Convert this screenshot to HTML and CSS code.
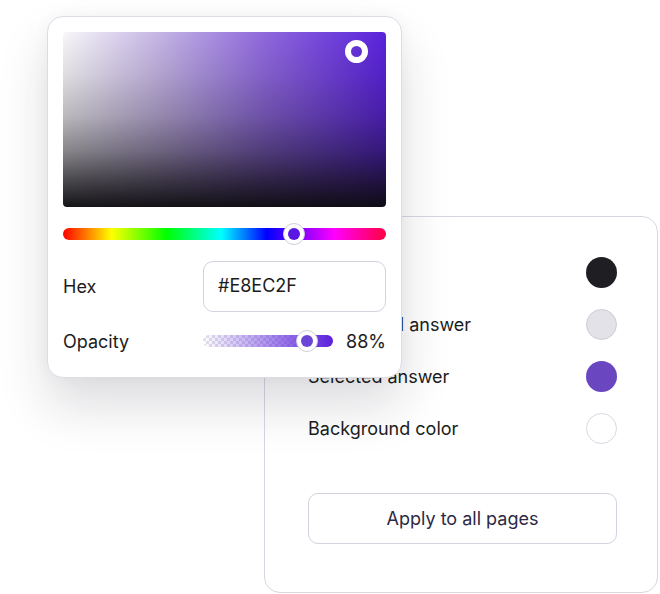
FILE: index.html
```html
<!DOCTYPE html>
<html lang="en">
<head>
    <meta charset="UTF-8">
    <meta name="viewport" content="width=device-width, initial-scale=1.0">
    <title>Color settings</title>
    <link rel="stylesheet" href="styles.css">
</head>
<body>
    <div class="stage">
        <!-- Settings card -->
        <div class="settings">
            <div class="row">
                <span>Text color</span>
                <span class="swatch swatch-dark"></span>
            </div>
            <div class="row">
                <span>Conditional answer</span>
                <span class="swatch swatch-light"></span>
            </div>
            <div class="row">
                <span>Selected answer</span>
                <span class="swatch swatch-purple"></span>
            </div>
            <div class="row">
                <span>Background color</span>
                <span class="swatch swatch-white"></span>
            </div>
            <button class="apply">Apply to all pages</button>
        </div>

        <!-- Color picker popover -->
        <div class="picker">
            <div class="spectrum">
                <span class="spectrum-thumb"></span>
            </div>
            <div class="hue">
                <span class="knob hue-knob"><span class="dot"></span></span>
            </div>
            <div class="field">
                <label>Hex</label>
                <div class="hex-input">#E8EC2F</div>
            </div>
            <div class="field opacity">
                <label>Opacity</label>
                <div class="opacity-track">
                    <span class="knob opacity-knob"><span class="dot dot-soft"></span></span>
                </div>
                <span class="value">88%</span>
            </div>
        </div>
    </div>
</body>
</html>
```

FILE: styles.css
```css
body {
    margin: 0;
    background: #fff;
    font-family: Inter, "Noto Sans", sans-serif;
    color: #1c1c20;
}
.stage {
    position: relative;
    width: 660px;
    height: 594px;
    overflow: hidden;
}

/* settings card */
.settings {
    box-sizing: border-box;
    width: 394px;
    height: 377px;
    margin: 216px 0 0 264px;
    padding: 29px 40px 0 43px;
    border: 1px solid #d8d7e1;
    border-radius: 16px;
    background: #fff;
}
.row {
    display: flex;
    align-items: center;
    justify-content: space-between;
    height: 52px;
    font-size: 18px;
}
.swatch {
    width: 29px;
    height: 29px;
    border-radius: 50%;
    border: 1px solid transparent;
}
.swatch-dark {
    background: #1f1f23;
}
.swatch-light {
    background: #e3e2e8;
    border-color: #cdccd6;
}
.swatch-purple {
    background: #6a47c1;
}
.swatch-white {
    background: #fff;
    border-color: #d9d8e1;
}
.apply {
    display: block;
    width: 100%;
    height: 51px;
    margin-top: 39px;
    border: 1.5px solid #d3d2de;
    border-radius: 10px;
    background: #fff;
    font-family: inherit;
    font-size: 18px;
    color: #2c2a44;
}

/* picker */
.picker {
    position: absolute;
    left: 47px;
    top: 16px;
    box-sizing: border-box;
    width: 355px;
    height: 362px;
    padding: 15px 15px 25px;
    border: 1px solid #dddce5;
    border-radius: 16px;
    background: #fff;
    box-shadow: 0 28px 50px rgba(30, 30, 50, 0.15), 0 0 18px rgba(30, 30, 50, 0.04);
}
.spectrum {
    position: relative;
    height: 175px;
    border-radius: 4px;
    background:
        linear-gradient(to top, rgba(12, 11, 14, 0.96), rgba(12, 11, 14, 0.74) 15%, rgba(12, 11, 14, 0.48) 32%, rgba(12, 11, 14, 0.26) 52%, rgba(12, 11, 14, 0.1) 76%, rgba(12, 11, 14, 0)),
        linear-gradient(to right, #f8f7fa, #c4b4e4 30%, #8f69dd 62%, #5a22dc);
}
.spectrum-thumb {
    position: absolute;
    left: 282px;
    top: 8px;
    width: 11px;
    height: 11px;
    border: 6px solid #fff;
    border-radius: 50%;
}
.hue {
    position: relative;
    height: 12px;
    margin-top: 21px;
    border-radius: 6px;
    background: linear-gradient(to right, #ff0000, #ffff00 15%, #00ff00 32%, #00ffff 49%, #0000ff 63%, #ff00ff 84%, #ff0040);
}
.knob {
    position: absolute;
    top: 50%;
    display: flex;
    align-items: center;
    justify-content: center;
    box-sizing: border-box;
    width: 22px;
    height: 22px;
    margin-top: -11px;
    border: 1px solid #d0cfd9;
    border-radius: 50%;
    background: #fff;
}
.hue-knob {
    left: 220px;
}
.dot {
    width: 12px;
    height: 12px;
    border-radius: 50%;
    background: #5a17e4;
}
.dot-soft {
    background: #6b45d6;
}
.field {
    display: grid;
    grid-template-columns: 140px 1fr;
    align-items: center;
    margin-top: 21px;
    font-size: 18px;
}
.hex-input {
    box-sizing: border-box;
    height: 51px;
    padding-left: 14px;
    line-height: 48px;
    border: 1.5px solid #d3d2dd;
    border-radius: 10px;
}
.opacity {
    grid-template-columns: 140px 130px 1fr;
    height: 22px;
    margin-top: 18px;
}
.opacity .value {
    text-align: right;
}
.opacity-track {
    position: relative;
    height: 12px;
    border-radius: 6px;
    background:
        linear-gradient(to right, rgba(91, 34, 220, 0), rgba(91, 34, 220, 0.6) 60%, #5b22dc),
        repeating-conic-gradient(#e2e1e8 0 25%, #fff 0 50%) 0 0 / 6px 6px;
}
.opacity-knob {
    left: 93px;
}
```
